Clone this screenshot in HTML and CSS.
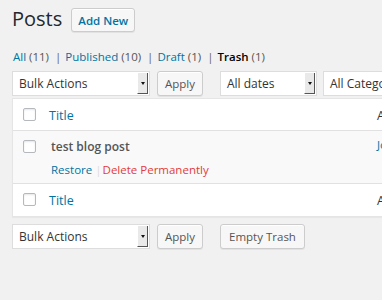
FILE: index.html
```html
<!DOCTYPE html>
<html>
<head>
<meta charset="utf-8">
<link rel="stylesheet" href="styles.css">
</head>
<body>
<div class="wrap">
  <div class="heading">
    <h1 class="title">Posts</h1>
    <span class="btn add-new">Add New</span>
  </div>
  <ul class="subsubsub">
    <li><a class="link">All <span class="count">(11)</span></a><span class="sep">|</span></li>
    <li><a class="link">Published <span class="count">(10)</span></a><span class="sep">|</span></li>
    <li><a class="link">Draft <span class="count">(1)</span></a><span class="sep">|</span></li>
    <li><a class="current">Trash <span class="count">(1)</span></a></li>
  </ul>
  <div class="tablenav top">
    <div class="select w-bulk"><span class="select-text">Bulk Actions</span><span class="arrow"></span></div>
    <span class="btn apply">Apply</span>
    <div class="select w-dates"><span class="select-text">All dates</span><span class="arrow"></span></div>
    <div class="select w-cats"><span class="select-text">All Categories</span><span class="arrow"></span></div>
  </div>
  <div class="table">
    <div class="row head">
      <div class="cb"><span class="checkbox"></span></div>
      <div class="col-title"><a class="link">Title</a></div>
      <div class="col-author">Author</div>
    </div>
    <div class="row item">
      <div class="cb"><span class="checkbox"></span></div>
      <div class="col-title">
        <div class="row-title">test blog post</div>
        <div class="row-actions"><a class="link">Restore</a><span class="rsep">|</span><a class="delete">Delete Permanently</a></div>
      </div>
      <div class="col-author"><a class="link">John</a></div>
    </div>
    <div class="row foot">
      <div class="cb"><span class="checkbox"></span></div>
      <div class="col-title"><a class="link">Title</a></div>
      <div class="col-author">Author</div>
    </div>
  </div>
  <div class="tablenav bottom">
    <div class="select w-bulk"><span class="select-text">Bulk Actions</span><span class="arrow"></span></div>
    <span class="btn apply">Apply</span>
    <span class="btn empty">Empty Trash</span>
  </div>
</div>
</body>
</html>
```
FILE: styles.css
```css
html, body {
  margin: 0;
  padding: 0;
  background: #f1f1f1;
  overflow: hidden;
}
body {
  font-family: "Open Sans", sans-serif;
  font-size: 11.5px;
  color: #444;
  width: 382px;
  height: 300px;
}
.wrap {
  padding: 6px 0 0 12px;
  width: 700px;
}
.heading {
  display: flex;
  align-items: flex-start;
  gap: 9px;
  height: 34px;
}
.title {
  margin: 0;
  font-size: 20px;
  font-weight: 400;
  line-height: 26px;
  color: #23282d;
}
.btn {
  display: inline-flex;
  align-items: center;
  justify-content: center;
  box-sizing: border-box;
  height: 25px;
  padding: 0 9px;
  border: 1px solid #ccc;
  border-radius: 3px;
  background: #f7f7f7;
  box-shadow: inset 0 1px 0 #fff, 0 1px 0 rgba(0,0,0,.06);
  color: #555;
  font-size: 11.5px;
  white-space: nowrap;
}
.add-new {
  margin-top: 2px;
  height: 24px;
  width: 64px;
  padding: 0;
  color: #0074a2;
  font-weight: 600;
}
.subsubsub {
  list-style: none;
  margin: 7px 0 0 0;
  padding: 0 0 0 1px;
  display: flex;
  line-height: 20px;
  height: 24px;
}
.subsubsub li { white-space: nowrap; }
.link { color: #0074a2; text-decoration: none; }
.count { color: #555; }
.current { color: #000; font-weight: 600; }
.current .count { font-weight: 400; color: #555; }
.sep { color: #666; padding: 0 4px 0 6px; }
.tablenav {
  display: flex;
  align-items: center;
  height: 25px;
}
.tablenav.top { margin-bottom: 2px; }
.select {
  box-sizing: border-box;
  height: 25px;
  background: #fff;
  border: 1px solid #ddd;
  display: flex;
  align-items: center;
  padding-left: 6px;
  color: #333;
  font-size: 12px;
  white-space: nowrap;
  overflow: hidden;
  flex: none;
}
.select-text { flex: 1; }
.arrow {
  width: 11px;
  height: 21px;
  box-sizing: border-box;
  margin-right: 1px;
  background: #e9e9e9;
  border-right: 1px solid #555;
  border-bottom: 1px solid #555;
  border-left: 1px solid #fff;
  display: flex;
  align-items: center;
  justify-content: center;
  flex: none;
}
.arrow::after {
  content: "";
  border-left: 2.5px solid transparent;
  border-right: 2.5px solid transparent;
  border-top: 3px solid #111;
}
.w-bulk { width: 138px; }
.w-dates { width: 97px; margin-left: 17px; }
.w-cats { width: 140px; margin-left: 6px; }
.apply { width: 46px; margin-left: 7px; padding: 0; flex: none; }
.empty { width: 85px; margin-left: 17px; padding: 0; flex: none; }
.table {
  box-sizing: border-box;
  background: #fff;
  border: 1px solid #e5e5e5;
  box-shadow: 0 1px 1px rgba(0,0,0,.04);
  width: 500px;
  margin-top: 2px;
}
.row {
  display: flex;
}
.row.head { height: 32px; border-bottom: 1px solid #e1e1e1; box-sizing: border-box; }
.row.item { height: 53px; background: #f9f9f9; border-bottom: 1px solid #e1e1e1; box-sizing: border-box; }
.row.foot { height: 32px; }
.cb {
  box-sizing: border-box;
  width: 28px;
  flex: none;
  padding: 9px 0 0 10px;
}
.checkbox {
  display: block;
  box-sizing: border-box;
  width: 13px;
  height: 13px;
  border: 1px solid #b4b9be;
  border-radius: 2px;
  background: #fff;
  box-shadow: inset 0 1px 2px rgba(0,0,0,.1);
}
.head .col-title, .foot .col-title {
  padding-top: 8px;
  font-size: 12.5px;
}
.col-title {
  box-sizing: border-box;
  width: 336px;
  flex: none;
  padding-left: 8px;
}
.col-author {
  padding-top: 8px;
  font-size: 12.5px;
  color: #333;
}
.item .col-title { padding-top: 6px; }
.item .col-author { padding-top: 6px; font-size: 11.5px; }
.row-title {
  font-size: 12px;
  font-weight: 600;
  color: #555;
  line-height: 20px;
  padding-left: 2px;
}
.row-actions {
  margin-top: 3px;
  font-size: 11.5px;
  line-height: 20px;
  padding-left: 2px;
}
.rsep { color: #ddd; padding: 0 1px 0 3px; }
.delete { color: #e13b3b; }
.tablenav.bottom { margin-top: 7px; }
```
